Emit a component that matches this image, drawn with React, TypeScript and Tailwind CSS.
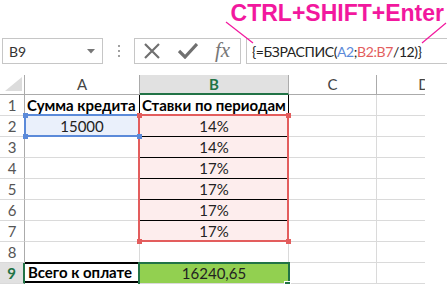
import React from "react";

const rows: { n: number; a?: string; b?: string }[] = [
  { n: 1, a: "Сумма кредита", b: "Ставки по периодам" },
  { n: 2, a: "15000", b: "14%" },
  { n: 3, b: "14%" },
  { n: 4, b: "17%" },
  { n: 5, b: "17%" },
  { n: 6, b: "17%" },
  { n: 7, b: "17%" },
  { n: 8 },
  { n: 9, a: "Всего к оплате", b: "16240,65" },
];

const cellBase = "h-[21px] border-r border-b border-[#dadada] flex items-center whitespace-nowrap overflow-hidden";

function Handle({ className }: { className: string }) {
  return <div className={`absolute w-[5px] h-[5px] ${className}`} />;
}

function FormulaBar() {
  return (
    <div className="flex h-[26px] pl-[2px]">
      <div className="w-[101px] border border-[#c6c6c6] flex items-center justify-between pl-[6px] pr-[7px]">
        <span className="text-[14px] text-[#333]">B9</span>
        <svg width="8" height="5" viewBox="0 0 8 5">
          <path d="M0 0 L8 0 L4 4.5 Z" fill="#777" />
        </svg>
      </div>
      <div className="w-[31px] flex flex-col items-center justify-center gap-[3px]">
        <span className="w-[2px] h-[2px] bg-[#a0a0a0]" />
        <span className="w-[2px] h-[2px] bg-[#a0a0a0]" />
        <span className="w-[2px] h-[2px] bg-[#a0a0a0]" />
      </div>
      <div className="w-[107px] border border-[#c6c6c6] flex items-center pl-[8px] gap-[17px]">
        <svg width="18" height="16" viewBox="0 0 18 16">
          <path d="M2 1 L16 15 M16 1 L2 15" stroke="#707070" strokeWidth="2.2" />
        </svg>
        <svg width="20" height="16" viewBox="0 0 20 16">
          <path d="M1 8 L7 14 L19 1" stroke="#707070" strokeWidth="3.2" fill="none" />
        </svg>
        <span className="font-['Liberation_Serif'] italic text-[21px] text-[#777] leading-none -mt-[2px]">fx</span>
      </div>
      <div className="ml-[5px] flex-1 border border-r-0 border-[#c6c6c6] flex items-center pl-[5px] text-[14px] tracking-[-0.4px] text-[#222]">
        <span>{"{=БЗРАСПИС("}</span>
        <span className="text-[#5b8ad9]">A2</span>
        <span>;</span>
        <span className="text-[#e35d5d]">B2:B7</span>
        <span>{"/12)}"}</span>
      </div>
    </div>
  );
}

function Sheet() {
  return (
    <div className="relative w-[425px] overflow-hidden">
      <div className="grid grid-cols-[25px_115px_149px_88px_94px] w-[471px] text-[15px] text-[#222]">
        <div className="h-[20px] border-r border-b border-[#ababab] relative">
          <svg className="absolute right-[2px] bottom-[3px]" width="17" height="14" viewBox="0 0 17 14">
            <path d="M17 0 L17 14 L0 14 Z" fill="#dcdcdc" />
          </svg>
        </div>
        <div className="h-[20px] border-r border-b border-[#ababab] flex items-center justify-center text-[#444]">A</div>
        <div className="h-[20px] border-r border-[#ababab] border-b-2 border-b-[#217346] bg-[#e1e1e1] flex items-center justify-center font-bold text-[#217346]">B</div>
        <div className="h-[20px] border-r border-b border-[#ababab] flex items-center justify-center text-[#444]">C</div>
        <div className="h-[20px] border-b border-[#ababab] flex items-center justify-center text-[#444]">D</div>

        {rows.map((r) => {
          const sel = r.n === 9;
          const head = sel
            ? "h-[21px] border-b border-b-[#dadada] border-r-2 border-r-[#217346] bg-[#e1e1e1] flex items-center justify-center font-bold text-[#217346]"
            : "h-[21px] border-b border-r border-b-[#dadada] border-r-[#ababab] flex items-center justify-center text-[#555]";
          let aCls = cellBase;
          let bCls = cellBase + " justify-center";
          if (r.n === 1) {
            aCls = "h-[21px] border-r border-r-black border-b border-b-[#dadada] flex items-center whitespace-nowrap overflow-hidden font-bold text-black pl-[2px]";
            bCls = "h-[21px] border-r border-r-black border-b border-b-[#dadada] flex items-center whitespace-nowrap overflow-hidden font-bold text-black pl-[2px]";
          } else if (r.n === 2) {
            aCls = cellBase + " justify-center bg-[#eaf0fb]";
            bCls = "h-[21px] border-r border-[#dadada] border-b border-b-black flex items-center justify-center bg-[#fdeded]";
          } else if (r.n >= 3 && r.n <= 6) {
            bCls = "h-[21px] border-r border-[#dadada] border-b border-b-black flex items-center justify-center bg-[#fdeded]";
          } else if (r.n === 7) {
            bCls = cellBase + " justify-center bg-[#fdeded]";
          } else if (r.n === 9) {
            aCls = "h-[21px] border-2 border-black border-l-0 -mt-px flex items-center whitespace-nowrap overflow-hidden font-bold text-black pl-[3px]";
            bCls = cellBase + " justify-center bg-[#92d050]";
          }
          return (
            <React.Fragment key={r.n}>
              <div className={head}>{r.n}</div>
              <div className={aCls}>{r.a}</div>
              <div className={bCls}>{r.b}</div>
              <div className={cellBase}></div>
              <div className="h-[21px] border-b border-[#dadada]"></div>
            </React.Fragment>
          );
        })}
      </div>

      {/* range highlights */}
      <div className="absolute left-[24px] top-[39px] w-[116px] h-[23px] border-2 border-[#5b8ad9]" />
      <div className="absolute left-[138px] top-[39px] w-[151px] h-[128px] border-2 border-[#e35d5d]" />
      <div className="absolute left-[138px] top-[187px] w-[152px] h-[24px] border-2 border-[#217346]" />

      <Handle className="left-[23px] top-[38px] bg-[#5b8ad9]" />
      <Handle className="left-[23px] top-[59px] bg-[#5b8ad9]" />
      <Handle className="left-[137px] top-[59px] bg-[#5b8ad9]" />
      <Handle className="left-[137px] top-[38px] bg-[#e35d5d]" />
      <Handle className="left-[286px] top-[38px] bg-[#e35d5d]" />
      <Handle className="left-[137px] top-[164px] bg-[#e35d5d]" />
      <Handle className="left-[286px] top-[164px] bg-[#e35d5d]" />
      <div className="absolute left-[284px] top-[206px] w-[7px] h-[7px] bg-[#217346] border border-white" />
    </div>
  );
}

export default function App() {
  return (
    <div className="relative w-[447px] h-[288px] bg-white overflow-hidden font-['Lato','Roboto',sans-serif]">
      <div className="h-[38px] flex justify-end items-start pr-[3px]">
        <span className="font-['Liberation_Sans',sans-serif] font-bold text-[23px] leading-none mt-[2px] text-[#f2189e]">
          CTRL+SHIFT+Enter
        </span>
      </div>
      <FormulaBar />
      <div className="h-[11px]" />
      <Sheet />
      <svg className="absolute left-0 top-0 pointer-events-none" width="447" height="288">
        <line x1="226" y1="22" x2="253" y2="43" stroke="#f2189e" strokeWidth="1.2" />
        <line x1="446" y1="23" x2="422" y2="43" stroke="#f2189e" strokeWidth="1.2" />
      </svg>
    </div>
  );
}
